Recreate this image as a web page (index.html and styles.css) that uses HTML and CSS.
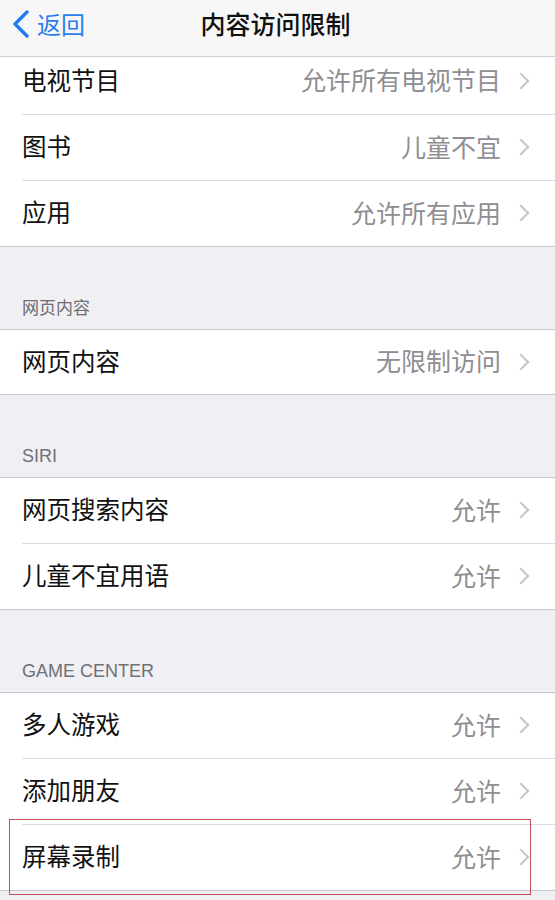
FILE: index.html
```html
<!DOCTYPE html>
<html lang="zh-CN">
<head>
    <meta charset="UTF-8">
    <meta name="viewport" content="width=device-width, initial-scale=1.0">
    <title>内容访问限制</title>
    <link rel="stylesheet" href="styles.css">
</head>
<body>

    <!-- Navigation Bar -->
    <div class="navbar">
        <div class="back">
            <svg class="back-icon" width="20" height="28" viewBox="0 0 20 28">
                <polyline points="16,2 4,14 16,26" fill="none" stroke="#1f7cf2" stroke-width="3.4" stroke-linecap="round" stroke-linejoin="round"/>
            </svg>
            <span>返回</span>
        </div>
        <div class="title">内容访问限制</div>
    </div>

    <div class="group">
        <div class="row cut"><div class="row-inner"><span class="label">电视节目</span><span class="value">允许所有电视节目</span><span class="chev"></span></div></div>
        <div class="row"><div class="row-inner"><span class="label">图书</span><span class="value">儿童不宜</span><span class="chev"></span></div></div>
        <div class="row"><div class="row-inner"><span class="label">应用</span><span class="value">允许所有应用</span><span class="chev"></span></div></div>
    </div>

    <div class="section-header">网页内容</div>
    <div class="group">
        <div class="row short"><div class="row-inner"><span class="label">网页内容</span><span class="value">无限制访问</span><span class="chev"></span></div></div>
    </div>

    <div class="section-header latin">SIRI</div>
    <div class="group">
        <div class="row"><div class="row-inner"><span class="label">网页搜索内容</span><span class="value">允许</span><span class="chev"></span></div></div>
        <div class="row"><div class="row-inner"><span class="label">儿童不宜用语</span><span class="value">允许</span><span class="chev"></span></div></div>
    </div>

    <div class="section-header latin">GAME CENTER</div>
    <div class="group">
        <div class="row"><div class="row-inner"><span class="label">多人游戏</span><span class="value">允许</span><span class="chev"></span></div></div>
        <div class="row"><div class="row-inner"><span class="label">添加朋友</span><span class="value">允许</span><span class="chev"></span></div></div>
        <div class="row">
            <div class="row-inner"><span class="label">屏幕录制</span><span class="value">允许</span><span class="chev"></span></div>
            <!-- annotation box -->
            <div class="mark"></div>
        </div>
    </div>

</body>
</html>
```

FILE: styles.css
```css
* {
    box-sizing: border-box;
    margin: 0;
    padding: 0;
}

body {
    background: #efeff4;
    font-family: "Noto Sans CJK SC", "Noto Sans", sans-serif;
    color: #111;
    width: 555px;
    height: 900px;
    overflow: hidden;
}

/* Navigation Bar */
.navbar {
    position: relative;
    height: 57px;
    background: #f7f7f7;
    border-bottom: 1px solid #cfcfd2;
    display: flex;
    align-items: center;
    justify-content: center;
}

.back {
    position: absolute;
    left: 11px;
    top: 10px;
    display: flex;
    align-items: center;
    gap: 6px;
    color: #2a7ef0;
    font-size: 24px;
    line-height: 28px;
}

.back-icon {
    display: block;
}

.title {
    font-size: 25px;
    font-weight: 500;
    color: #111;
    margin-top: -11px;
    margin-right: 4px;
}

/* Groups */
.group {
    background: #fff;
    border-bottom: 1px solid #c8c7cc;
}

.section-header + .group {
    border-top: 1px solid #c8c7cc;
}

.section-header {
    height: 82px;
    padding: 0 22px 10px;
    display: flex;
    align-items: flex-end;
    font-size: 17px;
    color: #6d6d72;
}

.section-header.latin {
    font-family: "Liberation Sans", "Noto Sans CJK SC", sans-serif;
    font-size: 18px;
    color: #707075;
    padding-bottom: 10px;
}

.row {
    padding-left: 22px;
    position: relative;
}

.row-inner {
    height: 66px;
    display: flex;
    align-items: center;
    padding-right: 26px;
    padding-bottom: 4px;
    border-bottom: 1px solid #dcdce0;
}

.row:last-child .row-inner {
    border-bottom: none;
    height: 65px;
}

.row.cut .row-inner {
    height: 58px;
    padding-bottom: 13px;
}

.row.short .row-inner {
    height: 64px;
}

.label {
    flex: 1;
    font-size: 24.5px;
    color: #111;
}

.value {
    font-size: 25px;
    color: #8e8e93;
    margin-right: 17px;
}

.chev {
    width: 11px;
    height: 17px;
    position: relative;
    top: 2px;
}

.chev::before {
    content: "";
    position: absolute;
    left: -3px;
    top: 2px;
    width: 10px;
    height: 10px;
    border-top: 2px solid #c7c7cc;
    border-right: 2px solid #c7c7cc;
    transform: rotate(45deg);
}

/* Red annotation */
.mark {
    position: absolute;
    left: 9px;
    top: -6px;
    width: 522px;
    height: 76px;
    border: 1.5px solid #c44a5e;
    pointer-events: none;
}
```
